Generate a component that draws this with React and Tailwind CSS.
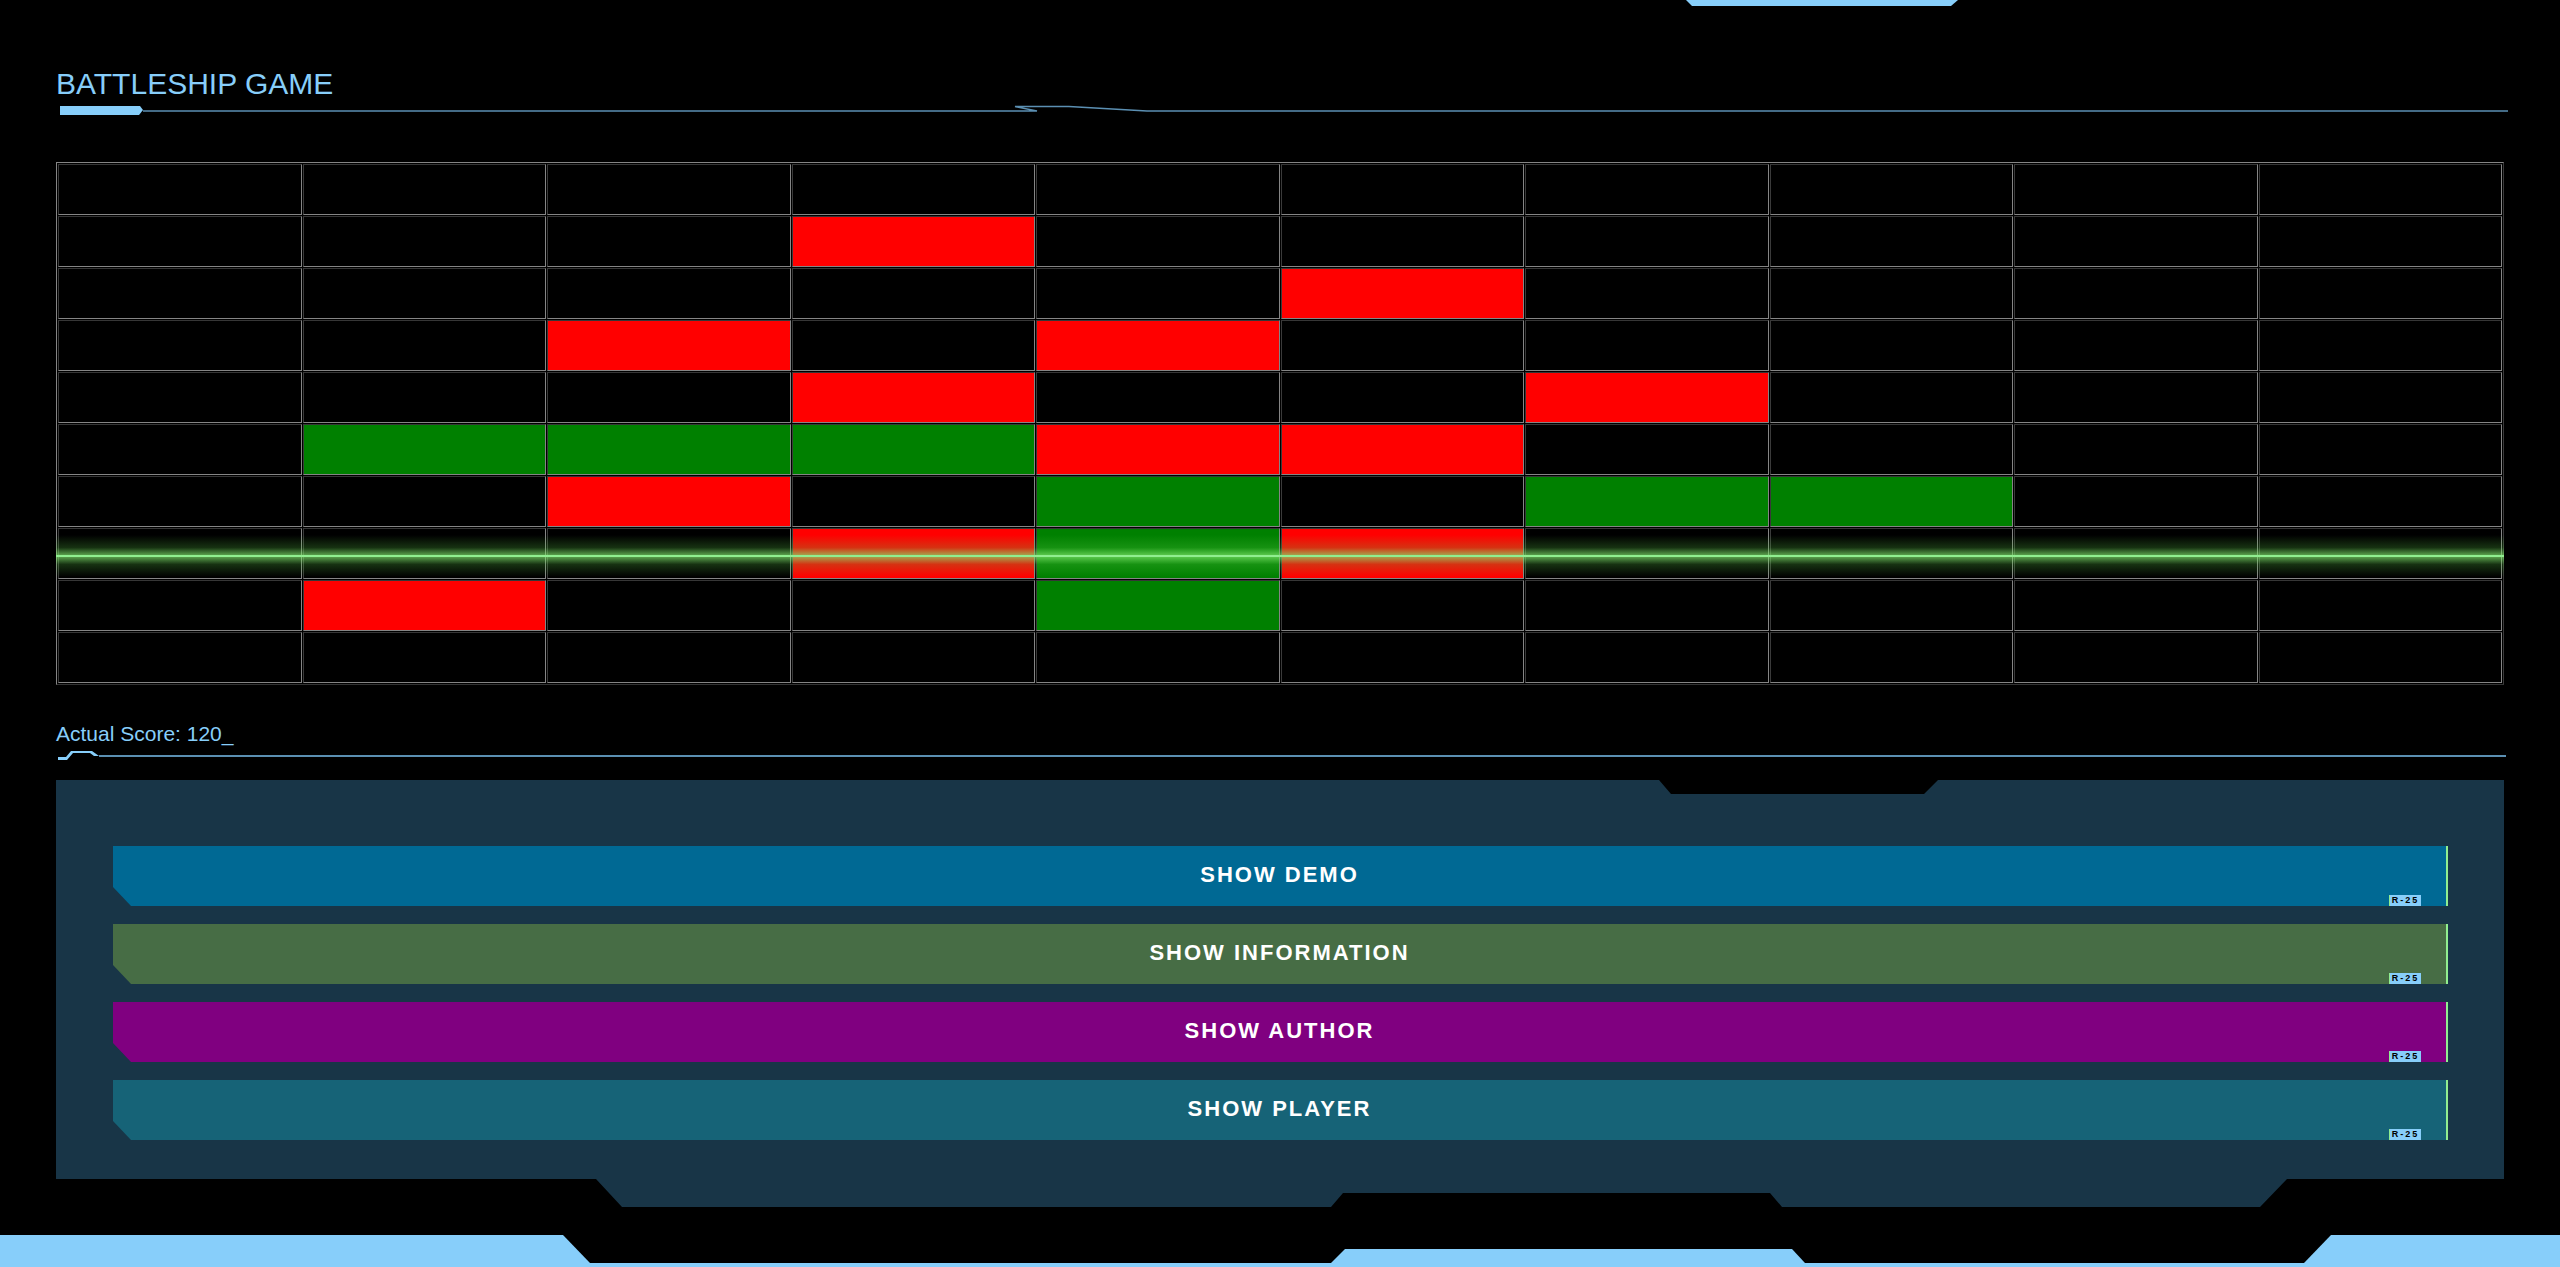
import React from 'react';

// board layout: R = hit, G = ship, . = empty
const board = [
    '..........',
    '...R......',
    '.....R....',
    '..R.R.....',
    '...R..R...',
    '.GGGRR....',
    '..R.G.GG..',
    '...RGR....',
    '.R..G.....',
    '..........',
];

const cellColor = {
    R: 'bg-[#ff0000]',
    G: 'bg-[#008000]',
    '.': 'bg-black',
};

const buttons = [
    { label: 'SHOW DEMO', color: 'bg-[#006994]' },
    { label: 'SHOW INFORMATION', color: 'bg-[#476d45]' },
    { label: 'SHOW AUTHOR', color: 'bg-[#800080]' },
    { label: 'SHOW PLAYER', color: 'bg-[#166377]' },
];

function TitleLine() {
    return (
        <svg width="2452" height="12" viewBox="0 0 2452 12" className="block">
            <polygon points="4,2 84,2 87,6 83,11 4,11" fill="#87cefa" />
            <polyline
                points="87,7 981,7 959,2.5 1013,2.5 1091,7 2452,7"
                fill="none"
                stroke="#5b8fb2"
                strokeWidth="1.5"
            />
        </svg>
    );
}

function ScoreLine() {
    return (
        <svg width="2452" height="12" viewBox="0 0 2452 12" className="block">
            <polygon points="2,11 2,8 10,8 15,2 36,2 43,7 38,7 34,4 17,4 11,11" fill="#87cefa" />
            <line x1="43" y1="7" x2="2450" y2="7" stroke="#5b8fb2" strokeWidth="2" />
        </svg>
    );
}

function Board() {
    return (
        <div className="relative w-[2448px]">
            <table className="w-[2448px] table-fixed border-separate border-spacing-[1px] border border-t-[#858585] border-l-[#858585] border-r-[#3a3a3a] border-b-[#333333]">
                <tbody>
                    {board.map((row, r) => (
                        <tr key={r}>
                            {row.split('').map((c, i) => (
                                <td
                                    key={i}
                                    className={`p-0 border border-t-[#363636] border-l-[#3a3a3a] border-r-[#858585] border-b-[#858585] ${cellColor[c]}`}
                                >
                                    <div className="h-[49px]" />
                                </td>
                            ))}
                        </tr>
                    ))}
                </tbody>
            </table>

            {/* scanner sweep */}
            <div className="absolute left-0 right-0 top-[373px] h-[42px] pointer-events-none bg-[linear-gradient(to_bottom,transparent_0%,rgba(90,200,70,0.25)_30%,rgba(130,230,110,0.75)_50%,rgba(90,200,70,0.25)_70%,transparent_100%)] flex items-center">
                <div className="h-[2px] w-full bg-[#90ee90]" />
            </div>
        </div>
    );
}

export default function App() {
    return (
        <div className="min-h-[1267px] w-[2560px] bg-black overflow-hidden font-['Liberation_Sans',Arial,sans-serif]">
            {/* top tab */}
            <div className="h-[6px] flex">
                <div className="ml-[1686px] w-[272px] h-[6px] bg-[#87cefa] [clip-path:polygon(0_0,100%_0,265px_100%,6px_100%)]" />
            </div>

            <div className="pl-[56px]">
                <h1 className="mt-[63px] h-[30px] text-[30px] leading-[30px] text-[#87cefa] font-normal">BATTLESHIP GAME</h1>
                <div className="mt-[5px]">
                    <TitleLine />
                </div>

                <div className="mt-[46px]">
                    <Board />
                </div>

                <p className="mt-[38px] h-[21px] text-[21px] leading-[21px] text-[#87cefa]">Actual Score: 120_</p>
                <div className="mt-[5px]">
                    <ScoreLine />
                </div>

                {/* control panel */}
                <div className="mt-[19px] w-[2448px] h-[427px] bg-[#183547] pl-[57px] pr-[56px] pt-[66px] flex flex-col gap-[18px] [clip-path:polygon(0_0,1603px_0,1615px_14px,1868px_14px,1882px_0,100%_0,100%_399px,2231px_399px,2204px_100%,1726px_100%,1714px_413px,1287px_413px,1275px_100%,566px_100%,540px_399px,0_399px)]">
                    {buttons.map((b) => (
                        <button
                            key={b.label}
                            className={`relative h-[60px] w-full ${b.color} border-r-2 border-[#90ee90] text-white font-bold text-[22px] tracking-[2px] pb-[3px] flex items-center justify-center [clip-path:polygon(0_0,100%_0,100%_100%,18px_100%,0_41px)]`}
                        >
                            {b.label}
                            <span className="absolute right-[25px] bottom-0 w-[32px] h-[11px] bg-[#87cefa] border-l border-[#90ee90] text-black text-[9px] leading-[11px] tracking-[2px] font-semibold flex items-center justify-center">
                                R-25
                            </span>
                        </button>
                    ))}
                </div>
            </div>

            {/* bottom frame */}
            <div className="mt-[28px]">
                <div className="h-[28px] flex items-end">
                    <div className="w-[590px] h-[28px] bg-[#87cefa] [clip-path:polygon(0_0,563px_0,100%_100%,0_100%)]" />
                    <div className="ml-[741px] w-[474px] h-[14px] bg-[#87cefa] [clip-path:polygon(14px_0,461px_0,100%_100%,0_100%)]" />
                    <div className="ml-[499px] w-[256px] h-[28px] bg-[#87cefa] [clip-path:polygon(27px_0,100%_0,100%_100%,0_100%)]" />
                </div>
                <div className="h-[4px] bg-[#87cefa]" />
            </div>
        </div>
    );
}
